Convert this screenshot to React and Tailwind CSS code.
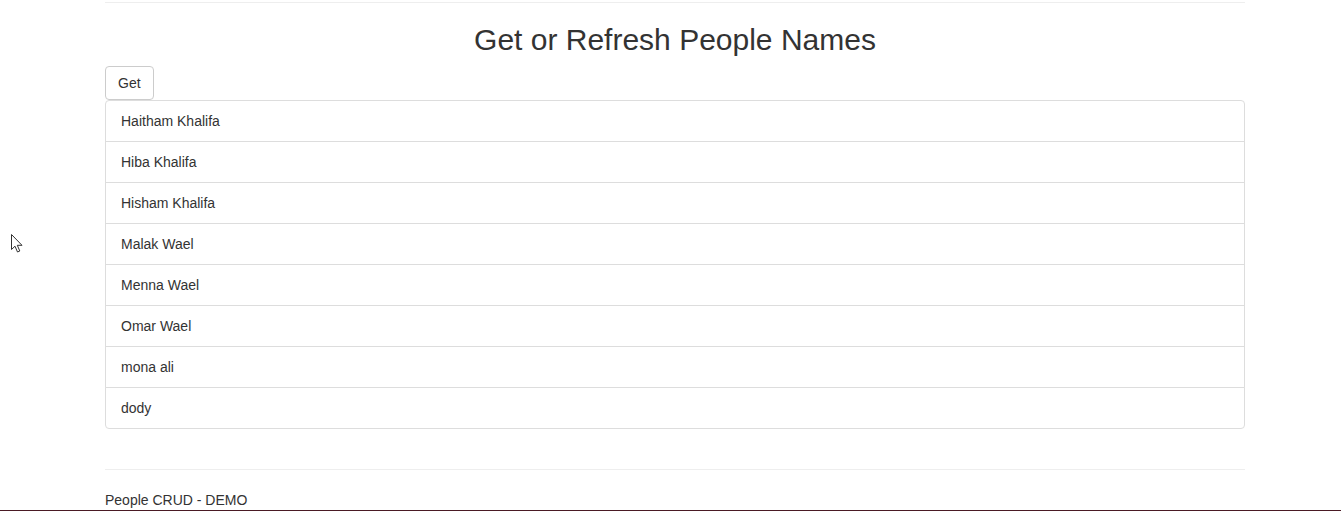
const PEOPLE = [
  "Haitham Khalifa",
  "Hiba Khalifa",
  "Hisham Khalifa",
  "Malak Wael",
  "Menna Wael",
  "Omar Wael",
  "mona ali",
  "dody",
];

export default function App() {
  return (
    <div className="relative h-[511px] overflow-hidden bg-white font-['Liberation_Sans',Arial,sans-serif] text-[14px] leading-[20px] text-[#333]">
      <div className="ml-[105px] w-[1140px] pt-[2px]">
        <hr className="border-0 border-t border-[#eee]" />
        <h2 className="mt-[20px] mb-[10px] text-center text-[30px] leading-[33px] font-normal">
          Get or Refresh People Names
        </h2>
        <button className="block h-[34px] rounded-[4px] border border-[#ccc] bg-white px-[12px] text-[14px] leading-[20px] text-[#333]">
          Get
        </button>
        <ul>
          {PEOPLE.map((name, i) => (
            <li
              key={name}
              className={`-mb-px border border-[#ddd] bg-white px-[15px] py-[10px] ${
                i === 0 ? "rounded-t-[4px]" : ""
              } ${i === PEOPLE.length - 1 ? "mb-0 rounded-b-[4px]" : ""}`}
            >
              {name}
            </li>
          ))}
        </ul>
        <hr className="mt-[40px] mb-[20px] border-0 border-t border-[#eee]" />
        <p>People CRUD - DEMO</p>
      </div>
      <div className="absolute left-0 right-0 top-[510px] h-[1px] bg-[#4a1a24]" />
      <svg className="absolute left-[11px] top-[234px]" width="13" height="20" viewBox="0 0 13 20">
        <path
          d="M0.5 0.5 L0.5 15.5 L4 12.2 L6.5 18 L8.8 17 L6.3 11.3 L11 11.3 Z"
          fill="white"
          stroke="#333"
          strokeWidth="1"
          strokeLinejoin="miter"
        />
      </svg>
    </div>
  );
}
